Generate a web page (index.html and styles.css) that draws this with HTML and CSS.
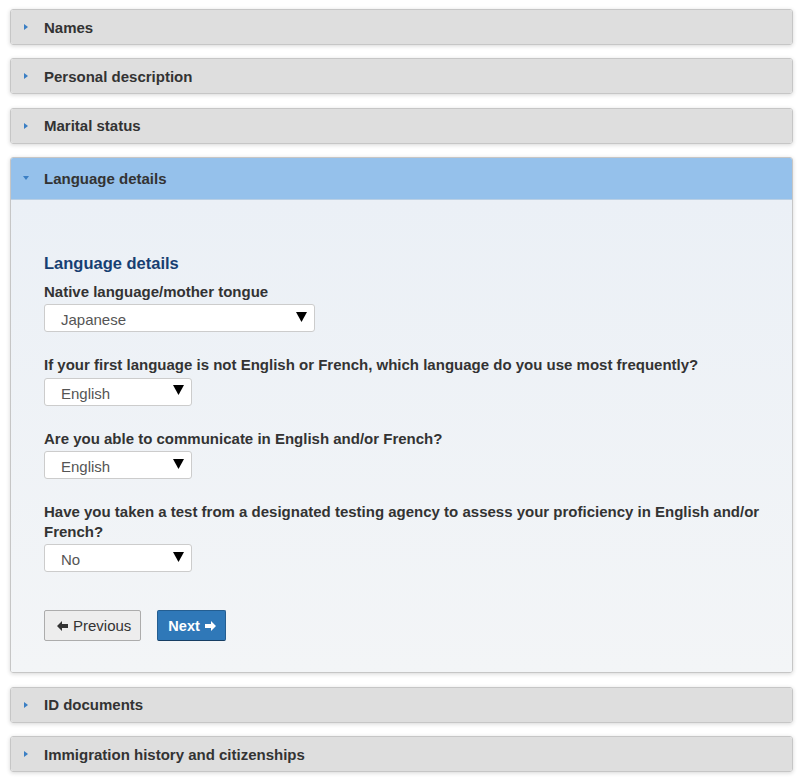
FILE: index.html
```html
<!DOCTYPE html>
<html lang="en">
<head>
<meta charset="utf-8">
<title>Application details</title>
<link rel="stylesheet" href="styles.css">
</head>
<body>
<div class="accordion">
  <section class="panel">
    <div class="panel-head"><span class="caret"><svg width="4" height="6" viewBox="0 0 4 6"><polygon points="0,0 4,3 0,6" fill="#3b7fc4"/></svg></span>Names</div>
  </section>
  <section class="panel">
    <div class="panel-head"><span class="caret"><svg width="4" height="6" viewBox="0 0 4 6"><polygon points="0,0 4,3 0,6" fill="#3b7fc4"/></svg></span>Personal description</div>
  </section>
  <section class="panel">
    <div class="panel-head"><span class="caret"><svg width="4" height="6" viewBox="0 0 4 6"><polygon points="0,0 4,3 0,6" fill="#3b7fc4"/></svg></span>Marital status</div>
  </section>
  <section class="panel open">
    <div class="panel-head"><span class="caret"><svg width="6" height="4" viewBox="0 0 6 4"><polygon points="0,0 6,0 3,4" fill="#3b7fc4"/></svg></span>Language details</div>
    <div class="panel-body">
      <h2 class="section-title">Language details</h2>
      <div class="field first">
        <label class="field-label">Native language/mother tongue</label>
        <div class="select wide"><span class="select-value">Japanese</span><svg class="select-arrow" width="11" height="10" viewBox="0 0 11 10"><polygon points="0,0 11,0 5.5,10" fill="#000"/></svg></div>
      </div>
      <div class="field">
        <label class="field-label">If your first language is not English or French, which language do you use most frequently?</label>
        <div class="select"><span class="select-value">English</span><svg class="select-arrow" width="11" height="10" viewBox="0 0 11 10"><polygon points="0,0 11,0 5.5,10" fill="#000"/></svg></div>
      </div>
      <div class="field">
        <label class="field-label">Are you able to communicate in English and/or French?</label>
        <div class="select"><span class="select-value">English</span><svg class="select-arrow" width="11" height="10" viewBox="0 0 11 10"><polygon points="0,0 11,0 5.5,10" fill="#000"/></svg></div>
      </div>
      <div class="field">
        <label class="field-label">Have you taken a test from a designated testing agency to assess your proficiency in English and/or French?</label>
        <div class="select"><span class="select-value">No</span><svg class="select-arrow" width="11" height="10" viewBox="0 0 11 10"><polygon points="0,0 11,0 5.5,10" fill="#000"/></svg></div>
      </div>
      <div class="actions">
        <button class="btn btn-default" type="button"><svg width="11" height="10" viewBox="0 0 11 10"><polygon points="0,5 5,0 5,3 11,3 11,7 5,7 5,10" fill="#333"/></svg>Previous</button>
        <button class="btn btn-primary" type="button">Next<svg width="11" height="10" viewBox="0 0 11 10"><polygon points="11,5 6,0 6,3 0,3 0,7 6,7 6,10" fill="#fff"/></svg></button>
      </div>
    </div>
  </section>
  <section class="panel">
    <div class="panel-head"><span class="caret"><svg width="4" height="6" viewBox="0 0 4 6"><polygon points="0,0 4,3 0,6" fill="#3b7fc4"/></svg></span>ID documents</div>
  </section>
  <section class="panel">
    <div class="panel-head"><span class="caret"><svg width="4" height="6" viewBox="0 0 4 6"><polygon points="0,0 4,3 0,6" fill="#3b7fc4"/></svg></span>Immigration history and citizenships</div>
  </section>
</div>
</body>
</html>
```
FILE: styles.css
```css
html, body {
  margin: 0;
  padding: 0;
  background: #ffffff;
}

body {
  font-family: "Liberation Sans", Arial, sans-serif;
  font-size: 15px;
  color: #333333;
}

.accordion {
  padding: 9px 8px 0 10px;
}

.panel {
  border: 1px solid #c6c6c6;
  border-radius: 3px;
  box-shadow: 0 1px 4px rgba(0, 0, 0, 0.16);
  margin-bottom: 13.33px;
  overflow: hidden;
}

.panel-head {
  display: flex;
  align-items: center;
  height: 34px;
  padding-left: 13px;
  background: #dedede;
  font-weight: bold;
  font-size: 15px;
  color: #333333;
}

.caret {
  width: 20px;
  display: flex;
  align-items: center;
}

.panel.open .panel-head {
  height: 41px;
  background: #95c1eb;
  border-bottom: 1px solid #b9cfe4;
  padding-left: 12px;
}

.panel.open .caret {
  width: 21px;
}

.panel-body {
  background: linear-gradient(#ebf0f6, #f3f5f7);
  padding: 52px 20px 31px 33px;
}

.section-title {
  margin: 0;
  font-size: 16.5px;
  line-height: 22px;
  font-weight: bold;
  color: #173f72;
}

.field {
  margin-top: 23px;
}

.field.first {
  margin-top: 8px;
}

.field-label {
  display: block;
  font-weight: bold;
  font-size: 15px;
  line-height: 19.5px;
  color: #333333;
  margin-bottom: 3px;
}

.select {
  box-sizing: border-box;
  width: 148px;
  height: 28px;
  background: #ffffff;
  border: 1px solid #cccccc;
  border-radius: 3px;
  display: flex;
  align-items: center;
  justify-content: space-between;
  padding: 3px 7px 0 16px;
}

.select.wide {
  width: 271px;
}

.select-value {
  color: #555555;
  font-size: 15px;
}

.select-arrow {
  margin-top: -6px;
}

.actions {
  margin-top: 38px;
  display: flex;
  gap: 16px;
}

.btn {
  box-sizing: border-box;
  height: 31px;
  display: flex;
  align-items: center;
  gap: 5px;
  font-family: "Liberation Sans", Arial, sans-serif;
  font-size: 15px;
  border-radius: 2px;
  cursor: pointer;
}

.btn-default {
  background: #ededed;
  border: 1px solid #acacac;
  color: #333333;
  padding: 0 9px 0 12px;
}

.btn-primary {
  background: #2f78b8;
  border: 1px solid #245e91;
  border-bottom-color: #173e63;
  color: #ffffff;
  font-weight: bold;
  font-size: 14.5px;
  padding: 0 9px 0 10px;
}
```
